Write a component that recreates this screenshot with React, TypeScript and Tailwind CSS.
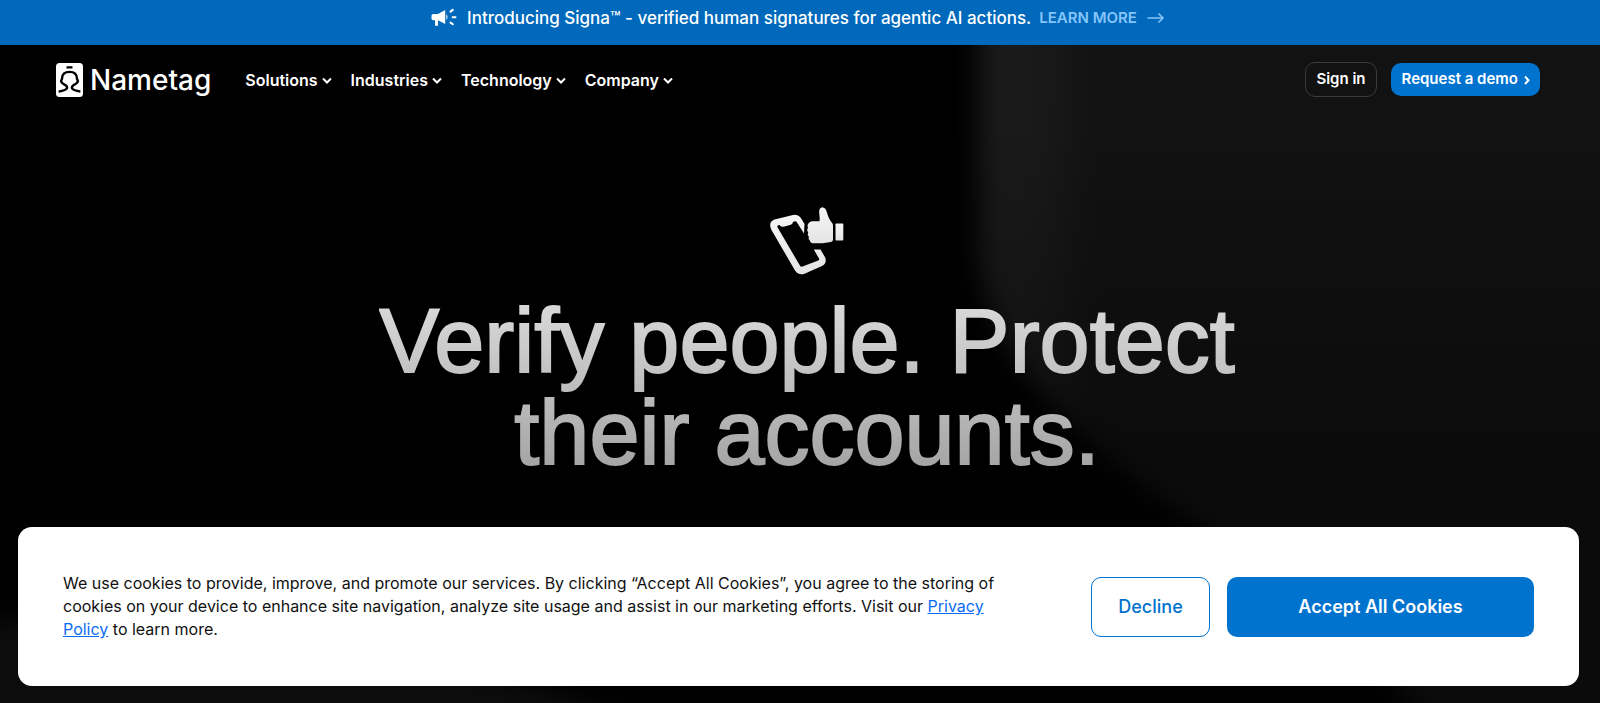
import React from "react";

const menus = ["Solutions", "Industries", "Technology", "Company"];

function Backdrop() {
  return (
    <svg
      aria-hidden="true"
      className="absolute inset-0 h-full w-full"
      viewBox="0 0 1600 703"
      preserveAspectRatio="xMidYMid slice"
    >
      <defs>
        <linearGradient id="sheen" x1="970" y1="0" x2="1600" y2="0" gradientUnits="userSpaceOnUse">
          <stop offset="0" stopColor="#1b1b1b" />
          <stop offset="0.12" stopColor="#191919" />
          <stop offset="0.19" stopColor="#121212" />
          <stop offset="1" stopColor="#121212" />
        </linearGradient>
        <linearGradient id="fall" x1="0" y1="120" x2="0" y2="460" gradientUnits="userSpaceOnUse">
          <stop offset="0" stopColor="#000" stopOpacity="0" />
          <stop offset="1" stopColor="#000" stopOpacity="0.4" />
        </linearGradient>
        <filter
          id="soft"
          x="-20%"
          y="-20%"
          width="140%"
          height="140%"
          colorInterpolationFilters="sRGB"
        >
          <feGaussianBlur stdDeviation="13" />
        </filter>
      </defs>
      <g filter="url(#soft)">
        <path
          d="M979 -60V255C985 360 1080 440 1190 520C1290 590 1400 660 1460 780H1700V-60Z"
          fill="url(#sheen)"
        />
        <path
          d="M930 -60V255C940 380 1050 460 1170 540C1280 610 1380 680 1440 780H1700V-60Z"
          fill="url(#fall)"
        />
        <path d="M-60 625C200 600 500 650 720 760H-60Z" fill="#0c0c0c" />
      </g>
    </svg>
  );
}

function Megaphone() {
  return (
    <svg viewBox="0 0 26 20" className="h-5 w-[26px]" fill="#fff" aria-hidden="true">
      <path d="M0.500 7.600Q0.500 6 2.300 6H7L14.200 2V16L7 12.200V17.800H4V12.200H2.300Q0.500 12.200 0.500 10.600Z" />
      <path d="M15.400 6Q17.600 9 15.400 12.200Z" />
      <path
        d="M19.500 3.600L21.800 1.900M21.700 9.200H24.500M19.500 14.600L21.800 16.300"
        stroke="#fff"
        strokeWidth="2"
        strokeLinecap="round"
      />
    </svg>
  );
}

function LogoMark() {
  return (
    <svg viewBox="0 0 27 34" className="h-[34px] w-[27px]" aria-hidden="true">
      <rect width="27" height="34" rx="3.500" fill="#fff" />
      <rect x="10.500" y="3.200" width="6" height="2.200" rx="0.500" fill="#000" />
      <path
        d="M2.600 28.600C6.500 28 10 27.300 11 25.300C11.500 23.800 10.500 22.800 9 21.800C6 20.500 4 18.600 6 15.800C6 10.800 9 8.900 13.500 8.900S21 10.800 21 15.800C23 18.600 21 20.500 18 21.800C16.500 22.800 15.500 23.800 16 25.300C17 27.300 20.500 28 24.400 28.600"
        fill="none"
        stroke="#000"
        strokeWidth="2.400"
      />
    </svg>
  );
}

function Chevron({ right = false }: { right?: boolean }) {
  return (
    <svg
      viewBox="0 0 10 10"
      className="h-2.5 w-2.5"
      fill="none"
      stroke="#fff"
      strokeWidth="2"
      aria-hidden="true"
    >
      <path d={right ? "M3 1.500L6.500 5.200L3 9" : "M1 3.500L5 7.500L9 3.500"} />
    </svg>
  );
}

function PhoneThumb() {
  return (
    <svg viewBox="0 0 74 68" className="h-[68px] w-[74px]" aria-hidden="true">
      <defs>
        <linearGradient id="iconFill" x1="0" y1="0" x2="0" y2="1">
          <stop offset="0" stopColor="#f6f6f6" />
          <stop offset="1" stopColor="#e4e4e4" />
        </linearGradient>
      </defs>
      <path
        fill="url(#iconFill)"
        fillRule="evenodd"
        d="M4.500 12.500L23 7.900Q28.500 7.200 31.500 12L34.500 17L34 26.500L27 15.400Q26.300 14.300 25.200 14.200L23.200 14.700Q22.600 17.500 20 18.100L13.500 19.700Q10.600 20 9.600 17.900L8.300 18.200Q6.700 18.700 7.600 20.500L29.900 58.500Q30.900 60.200 32.500 59.600L48.300 53.600Q49.700 52.900 49 51.500L43.800 42.500H50.500L55.200 50.500Q57.200 56.600 52 59.100L34.500 66.700Q28.500 68.700 25 63.500L1.200 22.500Q-2 15 4.500 12.500Z"
      />
      <path
        fill="url(#iconFill)"
        d="M39 15.800Q40 14.300 42 14.200H49.500C50.300 10.500 48.700 6.500 49.300 3Q50.200 0 53 .4Q55.500 .8 56.300 3.500C58 9 59 12 61.500 15.200Q63 16.500 63 18.200V32.500Q63 34.500 61 35L52.500 36.300H44Q40.500 36.500 39.800 33.500Q38 32.200 38.800 29.600Q37 28 38.200 25.300Q36.300 23.500 38 20.800Q36.700 18 39 15.800Z"
      />
      <rect x="65.500" y="16.400" width="7.800" height="17.200" rx="0.800" fill="url(#iconFill)" />
    </svg>
  );
}

export default function App() {
  return (
    <div className="relative flex min-h-screen flex-col overflow-hidden bg-black font-['Inter',sans-serif] text-white">
      <Backdrop />

      <a
        href="#signa"
        className="relative flex h-[45px] items-start justify-center bg-[#0069bb] pt-1.5 pr-1 text-[17px] leading-6 font-medium"
      >
        <span className="mr-2.5 flex h-6 items-center">
          <Megaphone />
        </span>
        <span>Introducing Signa™ - verified human signatures for agentic AI actions.</span>
        <span className="ml-2 text-[15px] font-semibold text-[#85c5fb]">LEARN MORE</span>
        <svg
          viewBox="0 0 18 12"
          className="mt-1.5 ml-2.5 h-3 w-[18px]"
          fill="none"
          stroke="#85c5fb"
          strokeWidth="1.600"
          aria-hidden="true"
        >
          <path d="M0.500 6H16M11.500 1.500L16 6L11.500 10.500" />
        </svg>
      </a>

      <header className="relative flex items-center justify-between pt-[17px] pr-[60px] pl-14">
        <div className="flex items-center gap-[34px]">
          <a href="#home" className="flex items-center gap-[7px]">
            <LogoMark />
            <span className="text-[28px] leading-8 font-medium">Nametag</span>
          </a>
          <nav className="flex items-center gap-[19px]">
            {menus.map((name) => (
              <button
                key={name}
                type="button"
                className="flex items-center gap-1 text-[16px] leading-6 font-semibold"
              >
                {name}
                <Chevron />
              </button>
            ))}
          </nav>
        </div>
        <div className="flex items-center gap-3.5">
          <a
            href="#signin"
            className="flex h-[35px] items-center rounded-[10px] border border-[#3c3c3c] px-2.5 text-[15px] font-semibold"
          >
            Sign in
          </a>
          <a
            href="#demo"
            className="flex h-[33px] items-center gap-1 rounded-[10px] bg-[#0073cf] pr-2 pl-[11px] text-[15px] font-semibold"
          >
            Request a demo
            <Chevron right />
          </a>
        </div>
      </header>

      <main className="relative flex flex-col items-center pt-[110px] pr-6 pl-[38px]">
        <PhoneThumb />
        <h1 className="mt-5 max-w-[960px] bg-gradient-to-b from-[#dcdcdc] to-[#a0a0a0] bg-clip-text pb-1 text-center font-['Liberation_Sans',sans-serif] text-[90px] leading-[92px] text-transparent [-webkit-text-stroke:2px_transparent]">
          Verify people. Protect
          <br />
          their accounts.
        </h1>
      </main>

      <section
        aria-label="Cookie consent"
        className="fixed right-[21px] bottom-[17px] left-[18px] flex items-center justify-between rounded-[14px] bg-white py-[45px] pr-[45px] pl-[45px] text-[#111]"
      >
        <p className="max-w-[960px] text-[16px] leading-[23px]">
          We use cookies to provide, improve, and promote our services. By clicking “Accept All
          Cookies”, you agree to the storing of cookies on your device to enhance site navigation,
          analyze site usage and assist in our marketing efforts. Visit our{" "}
          <a href="#privacy" className="text-[#0a6cf5] underline">
            Privacy Policy
          </a>{" "}
          to learn more.
        </p>
        <div className="flex shrink-0 gap-[17px]">
          <button
            type="button"
            className="h-[60px] w-[119px] rounded-[10px] border border-[#0073cf] text-[18px] font-medium text-[#0073cf]"
          >
            Decline
          </button>
          <button
            type="button"
            className="h-[60px] w-[307px] rounded-[10px] bg-[#0073cf] text-[18px] font-semibold text-white"
          >
            Accept All Cookies
          </button>
        </div>
      </section>
    </div>
  );
}
